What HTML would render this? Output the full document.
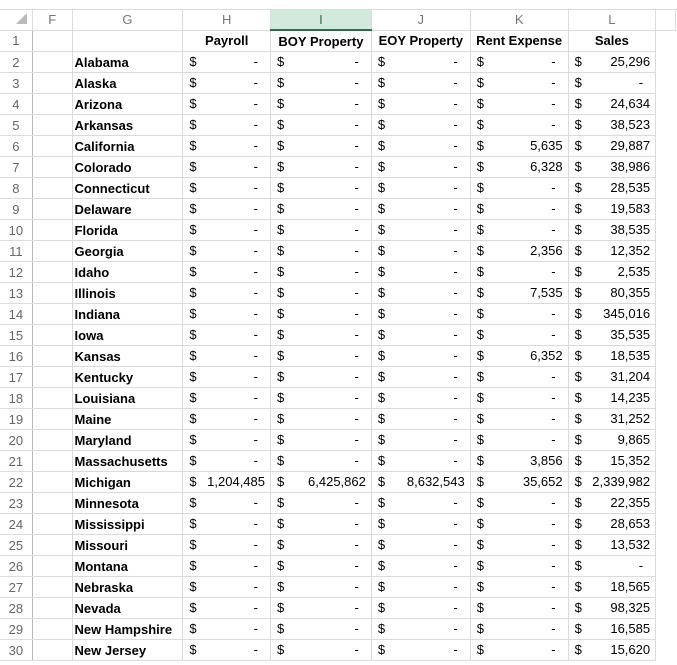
<!DOCTYPE html>
<html><head><meta charset="utf-8"><style>
body{margin:0;width:677px;height:665px;overflow:hidden;background:#fff;font-family:"Liberation Sans",Arial,sans-serif;position:relative}
.top{position:absolute;left:0;top:0;width:677px;height:9px;background:#fff;border-bottom:1px solid #e1e1e1}
table{position:absolute;left:-1px;top:9px;border-collapse:collapse;table-layout:fixed}
td{height:20px;padding:0;border:1px solid #dadada;font-size:13px;white-space:nowrap;overflow:hidden;color:#000}
tr.h td{height:19px;background:#fff;color:#777;text-align:center;border-color:#dcdcdc;font-size:13px}
tr.h td.sel{background:#d2eadb;color:#207245;border-bottom:2px solid #217346}
td.rn{background:#fff;color:#666;text-align:center;border-color:#dcdcdc;border-right:1px solid #b8b8b8}
td.nm{font-weight:bold;padding-left:2px}
td.hd{font-weight:bold;text-align:center}
td.m{position:relative}
td.m span.d{position:absolute;left:6px;top:2px}
td.m span.v{position:absolute;right:5px;top:2px}
td.m span.z{position:absolute;right:12px;top:2px}
.tri{position:absolute;left:16px;top:13px;width:0;height:0;border-left:11px solid transparent;border-bottom:11px solid #b9b9b9}
</style></head><body>
<div class="top"></div>
<table>
<colgroup><col style="width:33px"><col style="width:40px"><col style="width:111px"><col style="width:88px"><col style="width:101px"><col style="width:99px"><col style="width:98px"><col style="width:88px"><col style="width:20px"></colgroup>
<tr class="h"><td style="border-right-color:#dcdcdc"></td><td>F</td><td>G</td><td>H</td><td class="sel">I</td><td>J</td><td>K</td><td>L</td><td></td></tr>
<tr><td class="rn">1</td><td></td><td></td><td class="hd">Payroll</td><td class="hd">BOY Property</td><td class="hd">EOY Property</td><td class="hd">Rent Expense</td><td class="hd">Sales</td><td style="border:none"></td></tr>
<tbody id="b"></tbody>
</table>
<div class="tri"></div>
<script>
var rows=[["Alabama","","","","","25,296"],["Alaska","","","","",""],["Arizona","","","","","24,634"],["Arkansas","","","","","38,523"],["California","","","","5,635","29,887"],["Colorado","","","","6,328","38,986"],["Connecticut","","","","","28,535"],["Delaware","","","","","19,583"],["Florida","","","","","38,535"],["Georgia","","","","2,356","12,352"],["Idaho","","","","","2,535"],["Illinois","","","","7,535","80,355"],["Indiana","","","","","345,016"],["Iowa","","","","","35,535"],["Kansas","","","","6,352","18,535"],["Kentucky","","","","","31,204"],["Louisiana","","","","","14,235"],["Maine","","","","","31,252"],["Maryland","","","","","9,865"],["Massachusetts","","","","3,856","15,352"],["Michigan","1,204,485","6,425,862","8,632,543","35,652","2,339,982"],["Minnesota","","","","","22,355"],["Mississippi","","","","","28,653"],["Missouri","","","","","13,532"],["Montana","","","","",""],["Nebraska","","","","","18,565"],["Nevada","","","","","98,325"],["New Hampshire","","","","","16,585"],["New Jersey","","","","","15,620"]];
var h="";rows.forEach(function(r,i){h+='<tr><td class="rn">'+(i+2)+'</td><td></td><td class="nm">'+r[0]+'</td>';for(var j=1;j<6;j++){h+='<td class="m"><span class="d">$</span>'+(r[j]?'<span class="v">'+r[j]+'</span>':'<span class="z">-</span>')+'</td>';}h+='<td style="border:none"></td></tr>';});
document.getElementById("b").innerHTML=h;
</script>
</body></html>
